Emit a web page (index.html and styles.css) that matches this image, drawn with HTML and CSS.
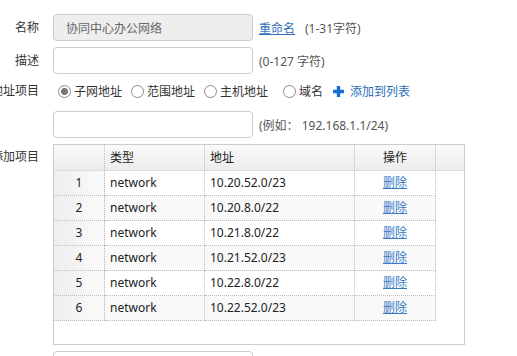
FILE: index.html
```html
<!DOCTYPE html>
<html>
<head>
    <title>地址组</title>
    <link rel="stylesheet" href="styles.css">
</head>

<body>
    <div class="form">
        <div class="row row-name">
            <label class="label">名称</label>
            <div class="field">
                <input class="text readonly" type="text" value="协同中心办公网络" readonly>
                <a class="link" href="#">重命名</a>
                <span class="hint">(1-31字符)</span>
            </div>
        </div>

        <div class="row">
            <label class="label">描述</label>
            <div class="field">
                <input class="text" type="text">
                <span class="hint">(0-127 字符)</span>
            </div>
        </div>

        <div class="row row-radio">
            <label class="label">地址项目</label>
            <div class="field radios">
                <label class="radio"><input type="radio" name="kind" checked>子网地址</label>
                <label class="radio"><input type="radio" name="kind">范围地址</label>
                <label class="radio radio-wide"><input type="radio" name="kind">主机地址</label>
                <label class="radio"><input type="radio" name="kind">域名</label>
                <a class="add" href="#">
                    <svg width="11" height="11" viewBox="0 0 11 11"><path d="M3.8 0h3.4v3.8H11v3.4H7.2V11H3.8V7.2H0V3.8h3.8z" fill="#1a6fd6"/></svg>
                    添加到列表
                </a>
            </div>
        </div>

        <div class="row">
            <label class="label"></label>
            <div class="field">
                <input class="text" type="text">
                <span class="hint">(例如： 192.168.1.1/24)</span>
            </div>
        </div>

        <div class="row row-table">
            <label class="label label-top">添加项目</label>
            <div class="field">
                <div class="list">
                    <div class="list-head">
                        <div class="cell"></div>
                        <div class="cell">类型</div>
                        <div class="cell">地址</div>
                        <div class="cell center">操作</div>
                        <div class="cell last"></div>
                    </div>
                    <div class="list-row">
                        <div class="cell num">1</div>
                        <div class="cell">network</div>
                        <div class="cell">10.20.52.0/23</div>
                        <div class="cell center"><a class="link" href="#">删除</a></div>
                    </div>
                    <div class="list-row">
                        <div class="cell num">2</div>
                        <div class="cell">network</div>
                        <div class="cell">10.20.8.0/22</div>
                        <div class="cell center"><a class="link" href="#">删除</a></div>
                    </div>
                    <div class="list-row">
                        <div class="cell num">3</div>
                        <div class="cell">network</div>
                        <div class="cell">10.21.8.0/22</div>
                        <div class="cell center"><a class="link" href="#">删除</a></div>
                    </div>
                    <div class="list-row">
                        <div class="cell num">4</div>
                        <div class="cell">network</div>
                        <div class="cell">10.21.52.0/23</div>
                        <div class="cell center"><a class="link" href="#">删除</a></div>
                    </div>
                    <div class="list-row">
                        <div class="cell num">5</div>
                        <div class="cell">network</div>
                        <div class="cell">10.22.8.0/22</div>
                        <div class="cell center"><a class="link" href="#">删除</a></div>
                    </div>
                    <div class="list-row">
                        <div class="cell num">6</div>
                        <div class="cell">network</div>
                        <div class="cell">10.22.52.0/23</div>
                        <div class="cell center"><a class="link" href="#">删除</a></div>
                    </div>
                </div>
            </div>
        </div>

        <div class="row">
            <label class="label"></label>
            <div class="field">
                <input class="text" type="text">
            </div>
        </div>
    </div>
</body>
</html>
```

FILE: styles.css
```css
body {
    margin: 0;
    font-size: 12px;
    color: #333;
    font-family: "Noto Sans", "Noto Sans CJK SC", sans-serif;
    background: #fff;
    overflow: hidden;
}

.form {
    margin-left: -21px;
    padding-top: 14px;
}

.row {
    display: flex;
    align-items: center;
    margin-bottom: 6px;
}

.row-radio {
    height: 22px;
    margin-top: 6px;
    margin-bottom: 9px;
}

.row-table {
    align-items: flex-start;
}

.label {
    width: 60px;
    flex: none;
    text-align: right;
    white-space: nowrap;
    margin-right: 14px;
    line-height: 16px;
}

.label-top {
    line-height: 26px;
}

.field {
    display: flex;
    align-items: center;
}

input.text {
    box-sizing: border-box;
    width: 200px;
    height: 27px;
    margin: 0 6px 0 0;
    padding: 0 12px;
    border: 1px solid #ccc;
    border-radius: 4px;
    font: inherit;
    color: #666;
    background: #fff;
    outline: none;
}

input.readonly {
    background: #eee;
}

.link {
    color: #2f6db5;
    text-decoration: underline;
}

.row-name .link {
    margin-right: 10px;
}

.hint {
    color: #555;
}

.radios {
    padding-left: 5px;
}

.radio {
    display: flex;
    align-items: center;
    margin-right: 9px;
}

.radio-wide {
    margin-right: 15px;
}

.radio input {
    appearance: none;
    -webkit-appearance: none;
    box-sizing: border-box;
    width: 13px;
    height: 13px;
    margin: 0 3px 0 0;
    border: 1px solid #8a8a8a;
    border-radius: 50%;
    background: #fff;
}

.radio input:checked {
    background: radial-gradient(circle, #7a7a7a 0, #7a7a7a 3.2px, #fff 3.8px);
}

.add {
    display: flex;
    align-items: center;
    margin-left: 1px;
    color: #2a6ebb;
    text-decoration: none;
}

.add svg {
    margin-right: 6px;
}

.list {
    box-sizing: border-box;
    width: 412px;
    height: 201px;
    border: 1px solid #ccc;
    background: #fff;
}

.list-head {
    display: grid;
    grid-template-columns: 51px 100px 150px 81px 1fr;
    height: 26px;
    box-sizing: border-box;
    border-bottom: 1px solid #dcdcdc;
    background: linear-gradient(to bottom, #fafafa, #ececec);
    color: #222;
}

.list-row {
    display: grid;
    grid-template-columns: 51px 100px 150px 81px;
    width: 382px;
    height: 25px;
    color: #222;
}

.list-row:nth-child(odd) {
    background: #f9f9f9;
}

.cell {
    box-sizing: border-box;
    padding: 0 5px;
    line-height: 24px;
    border-right: 1px dotted #bbb;
    white-space: nowrap;
}

.list-head .cell {
    line-height: 25px;
}

.list-row .cell {
    border-bottom: 1px dotted #bbb;
}

.list-head .last {
    border-right: none;
}

.center {
    text-align: center;
}

.num {
    text-align: center;
    background: linear-gradient(to right, #eeeeee, #fbfbfb);
}

.list-row .link {
    color: #3a7bc8;
}
```
